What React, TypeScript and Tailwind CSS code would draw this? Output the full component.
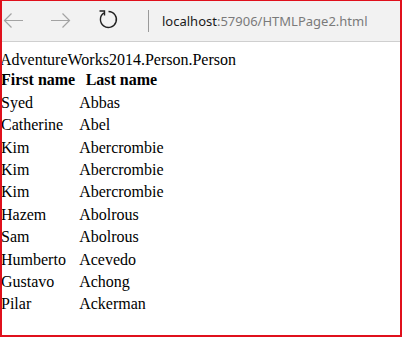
import React from "react";

const people: [string, string][] = [
  ["Syed", "Abbas"],
  ["Catherine", "Abel"],
  ["Kim", "Abercrombie"],
  ["Kim", "Abercrombie"],
  ["Kim", "Abercrombie"],
  ["Hazem", "Abolrous"],
  ["Sam", "Abolrous"],
  ["Humberto", "Acevedo"],
  ["Gustavo", "Achong"],
  ["Pilar", "Ackerman"],
];

function Toolbar() {
  return (
    <div className="flex h-[41px] items-center border-b border-[#cfcfcf] bg-[#f2f2f2]">
      <svg width="146" height="40" viewBox="0 0 146 40" className="shrink-0">
        {/* back */}
        <path d="M2.5 19.5H21M9.5 12.5L2.5 19.5L9.5 26.5" fill="none" stroke="#a3a3a3" strokeWidth="1.2" />
        {/* forward */}
        <path d="M49 19.5H67.5M60.5 12.5L67.5 19.5L60.5 26.5" fill="none" stroke="#a3a3a3" strokeWidth="1.2" />
        {/* refresh */}
        <path d="M106.5 10.5A8 8 0 1 1 101.9 11.9" fill="none" stroke="#222" strokeWidth="1.4" />
        <path d="M97.5 10H102.5V14.5" fill="none" stroke="#222" strokeWidth="1.4" />
      </svg>
      <div className="h-[22px] w-px shrink-0 bg-[#9a9a9a]" />
      <div className="ml-[13px] text-[13px] font-['Noto_Sans',sans-serif] leading-none whitespace-nowrap">
        <span className="text-[#1a1a1a]">localhost</span>
        <span className="text-[#7a7a7a]">:57906/HTMLPage2.html</span>
      </div>
    </div>
  );
}

export default function App() {
  return (
    <div className="h-[337px] w-[402px] overflow-hidden border-x-2 border-t border-b-2 border-[#e0101c] bg-white">
      <Toolbar />
      <div className="pt-[9px] text-[16px] leading-[18.4px] text-black font-['Liberation_Serif','Times_New_Roman',serif]">
        <div className="-ml-[2px]">AdventureWorks2014.Person.Person</div>
        <table className="-ml-[4px] -mt-px border-separate border-spacing-[2px]">
          <thead>
            <tr>
              <th className="p-px text-center font-bold">First name</th>
              <th className="p-px text-center font-bold">Last name</th>
            </tr>
          </thead>
          <tbody>
            {people.map(([first, last], i) => (
              <tr key={i}>
                <td className="p-px">{first}</td>
                <td className="p-px">{last}</td>
              </tr>
            ))}
          </tbody>
        </table>
      </div>
    </div>
  );
}
